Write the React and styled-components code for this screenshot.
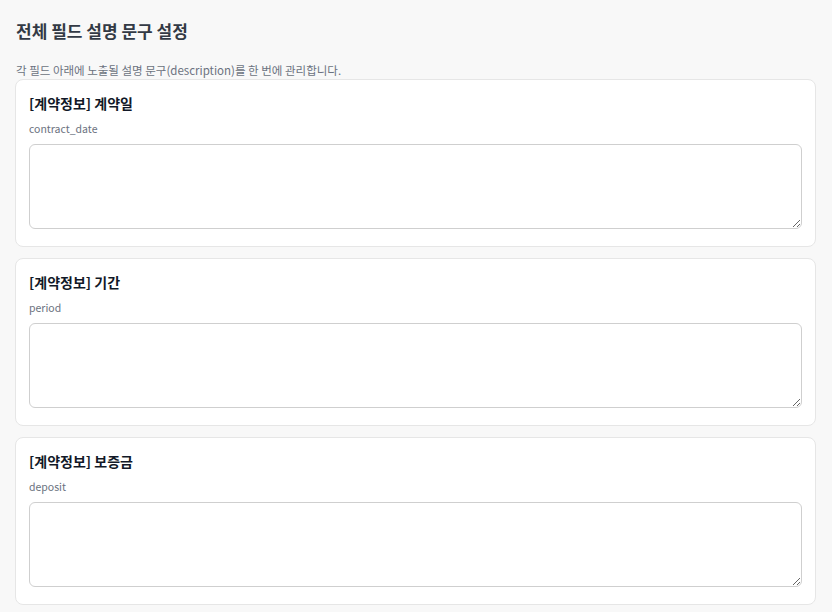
import React from 'react'
import styled, { createGlobalStyle } from 'styled-components'

const fields = [
    { label: '[계약정보] 계약일', key: 'contract_date' },
    { label: '[계약정보] 기간', key: 'period' },
    { label: '[계약정보] 보증금', key: 'deposit' },
]

function App() {
    return (
        <>
            <GlobalStyle />
            <Page>
                <Heading>전체 필드 설명 문구 설정</Heading>
                <Lead>각 필드 아래에 노출될 설명 문구(description)를 한 번에 관리합니다.</Lead>
                <List>
                    {fields.map((f) => (
                        <Card key={f.key}>
                            <CardTitle>{f.label}</CardTitle>
                            <FieldKey>{f.key}</FieldKey>
                            <Area />
                        </Card>
                    ))}
                </List>
            </Page>
        </>
    )
}

export default App

const GlobalStyle = createGlobalStyle`
    html, body {
        margin: 0;
        background: #f8f8f8;
        font-family: "Noto Sans CJK KR", "Noto Sans", sans-serif;
    }
`

const Page = styled.div`
    padding: 19px 16px 0 15px;
`

const Heading = styled.h1`
    margin: 0 0 0 1px;
    font-size: 17px;
    line-height: 24px;
    font-weight: 700;
    color: #333a45;
`

const Lead = styled.p`
    margin: 18px 0 0 1px;
    font-size: 11.5px;
    line-height: 18px;
    color: #6b7280;
`

const List = styled.div`
    display: flex;
    flex-direction: column;
    gap: 11px;
`

const Card = styled.div`
    background: #fff;
    border: 1px solid #e6e6e6;
    border-radius: 8px;
    padding: 13px 13px 17px;
`

const CardTitle = styled.div`
    font-size: 14px;
    line-height: 20px;
    font-weight: 700;
    color: #111827;
`

const FieldKey = styled.div`
    margin-top: 8px;
    font-size: 10.5px;
    line-height: 16px;
    color: #6b7280;
`

const Area = styled.textarea`
    display: block;
    box-sizing: border-box;
    width: 100%;
    height: 85px;
    margin-top: 7px;
    border: 1px solid #cfcfcf;
    border-radius: 6px;
    background: #fff;
    font-family: inherit;
    outline: none;
`
